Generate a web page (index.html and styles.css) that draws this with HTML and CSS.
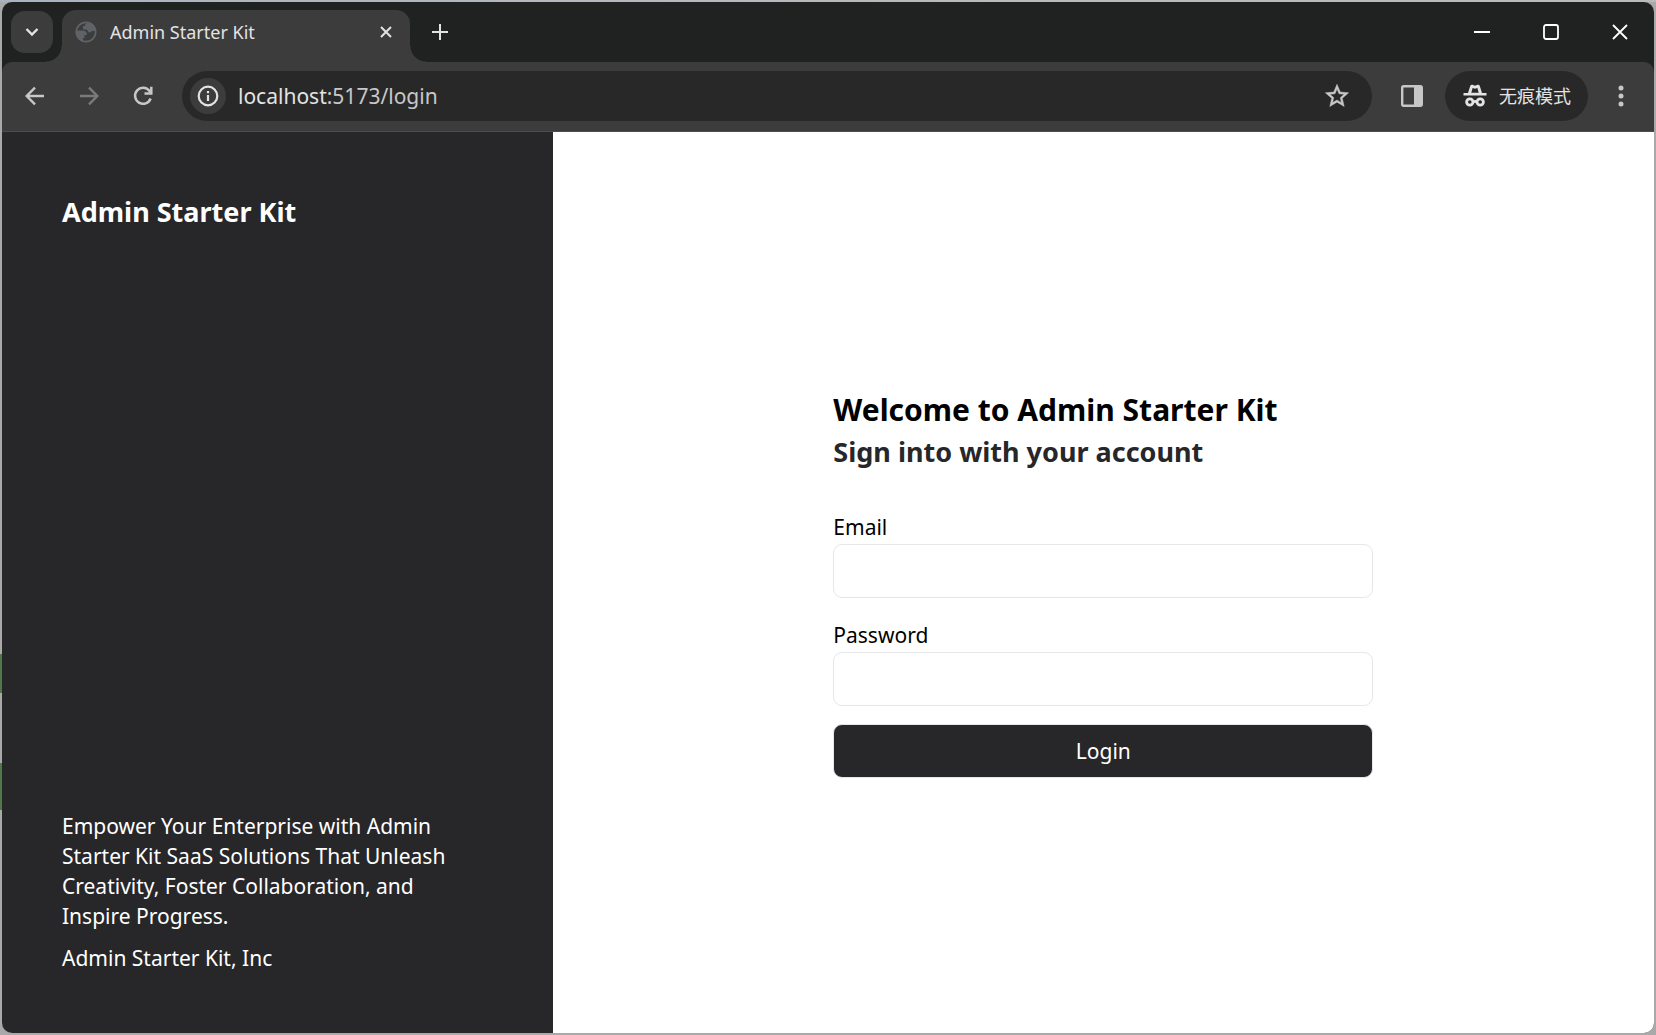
FILE: index.html
```html
<!DOCTYPE html>
<html lang="en">
<head>
<meta charset="utf-8">
<title>Admin Starter Kit</title>
<link rel="stylesheet" href="styles.css">
</head>
<body>
<div class="window">
  <header class="tabstrip">
    <button class="tab-search" aria-label="Search tabs">
      <svg width="14" height="10" viewBox="0 0 14 10" fill="none" stroke="currentColor" stroke-width="2.4"><path d="M1.5 2l5.500 5.500L12.500 2"/></svg>
    </button>
    <div class="tab">
      <svg class="globe" width="22" height="22" viewBox="0 0 22 22"><circle cx="11" cy="11" r="9.700" fill="none" stroke="currentColor" stroke-width="1.800"/><path fill="currentColor" d="M12.500 1.500C11 2.500 10 3.500 10 5H8v3.500h3c2.500 0 1 3 3.500 3 1.700 0 1.500-1.500 3-1.500H21C20.500 5 17 1.500 12.500 1.500zM1 9.500h6.500c3 0 4.500 1.500 4.500 4.500H9.500v3H8v3.500C4 19 1 15.500 1 9.500z"/></svg>
      <span class="tab-title">Admin Starter Kit</span>
      <button class="tab-close" aria-label="Close tab">
        <svg width="12" height="12" viewBox="0 0 12 12" stroke="currentColor" stroke-width="2"><path d="M1 1l10 10M11 1L1 11"/></svg>
      </button>
    </div>
    <button class="new-tab" aria-label="New tab">
      <svg width="16" height="16" viewBox="0 0 16 16" stroke="currentColor" stroke-width="2"><path d="M8 0v16M0 8h16"/></svg>
    </button>
    <div class="caption-buttons">
      <button aria-label="Minimize"><svg width="16" height="16" viewBox="0 0 16 16" stroke="currentColor" stroke-width="2"><path d="M0 8h16"/></svg></button>
      <button aria-label="Maximize"><svg width="16" height="16" viewBox="0 0 16 16" fill="none" stroke="currentColor" stroke-width="1.800"><rect x="1" y="1" width="14" height="14" rx="2"/></svg></button>
      <button aria-label="Close"><svg width="16" height="16" viewBox="0 0 16 16" stroke="currentColor" stroke-width="1.800"><path d="M1 1l14 14M15 1L1 15"/></svg></button>
    </div>
  </header>
  <div class="toolbar">
    <button class="tool" aria-label="Back"><svg width="20" height="20" viewBox="0 0 20 20" fill="none" stroke="currentColor" stroke-width="2.400"><path d="M19 10H2.500M10 1.700L1.700 10l8.300 8.300"/></svg></button>
    <button class="tool" aria-label="Forward" disabled><svg width="20" height="20" viewBox="0 0 20 20" fill="none" stroke="currentColor" stroke-width="2.400"><path d="M1 10h16.500M10 1.700l8.300 8.300-8.300 8.300"/></svg></button>
    <button class="tool" aria-label="Reload"><svg width="20" height="20" viewBox="0 0 20 20" fill="none" stroke="currentColor" stroke-width="2.500"><path d="M17.600 12.500A8 8 0 1 1 16.500 5l2 2M18.300.8v6.700h-6.800"/></svg></button>
    <div class="omnibox">
      <button class="site-info" aria-label="Site information"><svg width="22" height="22" viewBox="0 0 22 22" fill="none" stroke="currentColor" stroke-width="2.200"><circle cx="11" cy="11" r="9.300"/><path d="M11 10v6M11 6v2.200"/></svg></button>
      <span class="url">localhost<span class="url-rest">:5173/login</span></span>
      <button class="star" aria-label="Bookmark this tab"><svg width="28" height="28" viewBox="0 0 24 24" fill="currentColor" stroke="currentColor" stroke-width=".4"><path d="M22 9.240l-7.190-.62L12 2 9.190 8.630 2 9.240l5.460 4.730L5.820 21 12 17.270 18.180 21l-1.630-7.030zM12 15.400l-3.760 2.270 1-4.280-3.320-2.880 4.380-.38L12 6.100l1.710 4.040 4.380.38-3.320 2.880 1 4.280z"/></svg></button>
    </div>
    <button class="tool" aria-label="Side panel"><svg width="22" height="22" viewBox="0 0 22 22"><rect x="1.200" y="1.200" width="19.600" height="19.600" rx="1.500" fill="none" stroke="currentColor" stroke-width="2.400"/><path fill="currentColor" d="M13 1h8v20h-8z"/></svg></button>
    <button class="incognito">
      <svg width="24" height="24" viewBox="0 0 24 24" fill="none" stroke="currentColor"><path fill="currentColor" stroke="none" d="M5 9L7.300 1.700Q8 .3 9.500.8L12 1.700 14.500.8q1.500-.5 2.200.9L19 9h4.500v2.600H.5V9z"/><path fill="#282828" stroke="none" d="M8.300 8.800l1.300-4.800 2.400.8 2.400-.8 1.300 4.800z"/><g stroke-width="2.800"><circle cx="6.800" cy="18" r="3.200"/><circle cx="17.200" cy="18" r="3.200"/><path d="M10 18q2-1.200 4 0"/></g></svg>
      <span>无痕模式</span>
    </button>
    <button class="tool" aria-label="Menu"><svg width="6" height="22" viewBox="0 0 6 22" fill="currentColor"><circle cx="3" cy="3" r="2.500"/><circle cx="3" cy="11" r="2.500"/><circle cx="3" cy="19" r="2.500"/></svg></button>
  </div>
  <div class="page">
    <aside class="intro">
      <div class="brand">Admin Starter Kit</div>
      <div class="pitch">
        <p>Empower Your Enterprise with Admin Starter Kit SaaS Solutions That Unleash Creativity, Foster Collaboration, and Inspire Progress.</p>
        <p>Admin Starter Kit, Inc</p>
      </div>
    </aside>
    <main class="content">
      <form class="login">
        <h1>Welcome to Admin Starter Kit</h1>
        <h2>Sign into with your account</h2>
        <div class="field">
          <label for="email">Email</label>
          <input id="email" type="email">
        </div>
        <div class="field">
          <label for="password">Password</label>
          <input id="password" type="password">
        </div>
        <button class="submit" type="submit">Login</button>
      </form>
    </main>
  </div>
</div>
</body>
</html>
```
FILE: styles.css
```css
*, *::before, *::after { box-sizing: border-box; }

body {
  margin: 0;
  padding: 2px;
  min-height: 100vh;
  display: flex;
  background:
    linear-gradient(#4f7a48, #4f7a48) 0 654px / 2px 39px no-repeat,
    linear-gradient(#4f7a48, #4f7a48) 0 763px / 2px 47px no-repeat,
    linear-gradient(90deg, #aab4c0, #b8babb 60%) 0 0 / 100% 2px no-repeat,
    #a9a9a9;
  font-family: "Noto Sans", "Noto Sans CJK SC", sans-serif;
  font-size: 21px;
  line-height: 30px;
}

button {
  display: flex;
  align-items: center;
  justify-content: center;
  padding: 0;
  border: 0;
  background: none;
  color: inherit;
  font: inherit;
}

h1, h2, p { margin: 0; }

.window {
  flex: 1;
  min-width: 0;
  display: flex;
  flex-direction: column;
  border-radius: 10px;
  overflow: hidden;
  background: #202221;
}

/* Tab strip */
.tabstrip {
  height: 60px;
  display: flex;
  align-items: center;
  padding-left: 9px;
  color: #e3e3e3;
}

.tab-search {
  width: 42px;
  height: 42px;
  border-radius: 14px;
  background: #3c3c3c;
}

.tab {
  position: relative;
  align-self: flex-end;
  width: 348px;
  height: 52px;
  margin-left: 9px;
  padding: 0 16px 8px 13px;
  display: flex;
  align-items: center;
  gap: 13px;
  border-radius: 14px 14px 0 0;
  background: #3c3c3c;
}

.tab::before, .tab::after {
  content: "";
  position: absolute;
  bottom: 0;
  width: 16px;
  height: 16px;
}

.tab::before {
  right: 100%;
  background: radial-gradient(circle at 0 0, transparent 15px, #3c3c3c 16px);
}

.tab::after {
  left: 100%;
  background: radial-gradient(circle at 100% 0, transparent 15px, #3c3c3c 16px);
}

.globe { color: #5f6368; }
.tab-title { flex: 1; font-size: 18px; }
.tab-close { width: 16px; height: 24px; }
.new-tab { width: 60px; height: 42px; }

.caption-buttons {
  display: flex;
  align-self: stretch;
  margin-left: auto;
  color: #fff;
}

.caption-buttons button { width: 69px; }

/* Toolbar */
.toolbar {
  height: 70px;
  display: flex;
  align-items: center;
  padding: 0 6px 1px;
  border-bottom: 1px solid #4c4c4c;
  border-radius: 10px 10px 0 0;
  background: #3c3c3c;
  color: #c7c7c7;
}

.tool { width: 54px; height: 50px; }
.tool:disabled { color: #7a7a7a; }

.omnibox {
  flex: 1;
  height: 50px;
  margin: 0 13px 0 12px;
  padding: 0 21px 0 8px;
  display: flex;
  align-items: center;
  gap: 12px;
  border-radius: 25px;
  background: #282828;
}

.site-info {
  width: 36px;
  height: 36px;
  border-radius: 50%;
  background: #3c3c3c;
  color: #e3e3e3;
}

.url { flex: 1; color: #e3e3e3; }
.url-rest { color: #c7c7c7; }

.incognito {
  height: 50px;
  margin: 0 6px;
  padding: 0 17px 0 18px;
  gap: 12px;
  border-radius: 25px;
  background: #282828;
  color: #e3e3e3;
  font-size: 18px;
}

/* Page */
.page {
  flex: 1;
  display: grid;
  grid-template-columns: 1fr 2fr;
  background: #fff;
}

.intro {
  padding: 60px;
  display: flex;
  flex-direction: column;
  justify-content: space-between;
  background: #27272a;
  color: #fff;
}

.brand {
  font-size: 27px;
  font-weight: 700;
  line-height: 40px;
}

.pitch {
  display: grid;
  gap: 12px;
  padding-right: 24px;
}

.content {
  display: grid;
  place-content: center;
  grid-template-columns: minmax(0, 540px);
}

.login { color: #000; }

.login h1 {
  font-size: 30px;
  font-weight: 700;
  line-height: 45px;
}

.login h2 {
  margin-bottom: 40px;
  font-size: 27px;
  font-weight: 700;
  line-height: 40px;
  color: #27272a;
}

.field {
  display: grid;
  gap: 2px;
  margin-bottom: 22px;
}

.field + .submit { margin-top: -4px; }

.field input {
  width: 100%;
  height: 54px;
  padding: 0 12px;
  border: 1px solid #e5e7eb;
  border-radius: 9px;
  font: inherit;
}

.submit {
  width: 100%;
  height: 54px;
  border: 1px solid #e5e7eb;
  border-radius: 9px;
  background: #27272a;
  color: #fff;
}
```
